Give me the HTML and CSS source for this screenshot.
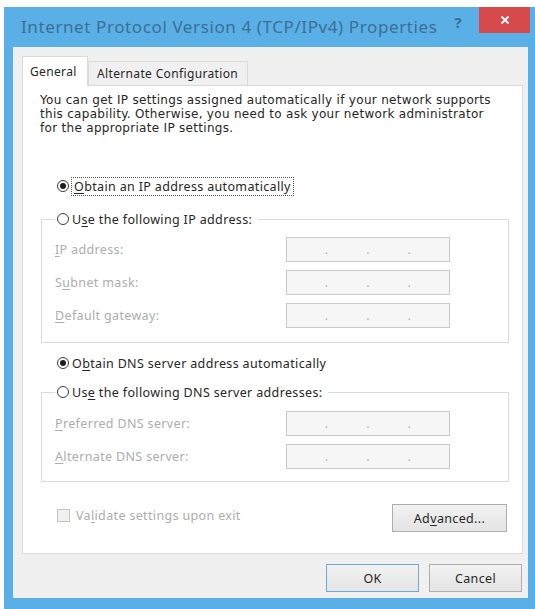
FILE: index.html
```html
<!DOCTYPE html>
<html lang="en">
<head>
    <meta charset="UTF-8">
    <title>Internet Protocol Version 4 (TCP/IPv4) Properties</title>
    <link rel="stylesheet" href="styles.css">
</head>
<body>
    <div class="window">
        <div class="titlebar">
            <span class="title">Internet Protocol Version 4 (TCP/IPv4) Properties</span>
            <span class="help">?</span>
            <span class="close">
                <svg width="10" height="10" viewBox="0 0 10 10"><path d="M1.5 1.5 L8.5 8.5 M8.5 1.5 L1.5 8.5" stroke="#fff" stroke-width="1.8"/></svg>
            </span>
        </div>

        <div class="content">
            <div class="tabs">
                <div class="tab active">General</div>
                <div class="tab">Alternate Configuration</div>
            </div>

            <div class="panel">
                <p class="intro">You can get IP settings assigned automatically if your network supports<br>this capability. Otherwise, you need to ask your network administrator<br>for the appropriate IP settings.</p>

                <div class="option first">
                    <span class="radio checked"></span>
                    <span class="focus"><u>O</u>btain an IP address automatically</span>
                </div>

                <fieldset class="group ip-group">
                    <legend class="option">
                        <span class="radio"></span>
                        <span>U<u>s</u>e the following IP address:</span>
                    </legend>
                    <div class="field"><span class="label"><u>I</u>P address:</span><span class="ip"><i>.</i><i>.</i><i>.</i></span></div>
                    <div class="field"><span class="label">S<u>u</u>bnet mask:</span><span class="ip"><i>.</i><i>.</i><i>.</i></span></div>
                    <div class="field"><span class="label"><u>D</u>efault gateway:</span><span class="ip"><i>.</i><i>.</i><i>.</i></span></div>
                </fieldset>

                <div class="option dns-auto">
                    <span class="radio checked"></span>
                    <span>O<u>b</u>tain DNS server address automatically</span>
                </div>

                <fieldset class="group dns-group">
                    <legend class="option">
                        <span class="radio"></span>
                        <span>Us<u>e</u> the following DNS server addresses:</span>
                    </legend>
                    <div class="field"><span class="label"><u>P</u>referred DNS server:</span><span class="ip"><i>.</i><i>.</i><i>.</i></span></div>
                    <div class="field"><span class="label"><u>A</u>lternate DNS server:</span><span class="ip"><i>.</i><i>.</i><i>.</i></span></div>
                </fieldset>

                <div class="panel-footer">
                    <span class="check"><span class="box"></span><span>Va<u>l</u>idate settings upon exit</span></span>
                    <button class="btn advanced">Ad<u>v</u>anced...</button>
                </div>
            </div>

            <div class="actions">
                <button class="btn default">OK</button>
                <button class="btn">Cancel</button>
            </div>
        </div>
    </div>
</body>
</html>
```

FILE: styles.css
```css
:root {
    --frame: #5aafe6;
    --text: #262626;
    --disabled: #adadad;
    --line: #dadada;
}

body {
    margin: 0;
    background: #fff;
    font-family: "Noto Sans", "Open Sans", sans-serif;
    font-size: 12.5px;
    letter-spacing: 0.35px;
    color: var(--text);
}

u {
    text-decoration-thickness: 1px;
    text-underline-offset: 2px;
}

/* Window frame */
.window {
    box-sizing: border-box;
    width: 531px;
    margin: 7px 0 0 4px;
    padding: 0 7px 11px 9px;
    background: var(--frame);
}

.titlebar {
    height: 40px;
    display: flex;
}

.title {
    flex: 1;
    padding: 8px 0 0 8px;
    font-size: 17px;
    letter-spacing: 0.6px;
    color: #3b6f94;
    white-space: nowrap;
}

.help {
    padding: 5px 17px 0 0;
    font-size: 15px;
    font-weight: bold;
    color: #3b6f94;
}

.close {
    width: 51px;
    height: 26px;
    margin-right: -2px;
    background: #d64a4c;
    display: flex;
    align-items: center;
    justify-content: center;
}

.content {
    height: 551px;
    background: #f0f0f0;
    overflow: hidden;
}

/* Tabs */
.tabs {
    display: flex;
    align-items: flex-end;
    margin: 9px 0 0 9px;
    height: 29px;
}

.tab {
    box-sizing: border-box;
    width: 160px;
    height: 24px;
    padding: 3px 0 0 8px;
    border: 1px solid var(--line);
    border-bottom: none;
    background: #f0f0f0;
    font-size: 12px;
}

.tab.active {
    height: 30px;
    margin-bottom: -1px;
    width: 66px;
    padding: 6px 0 0 7px;
    background: #fff;
    position: relative;
    z-index: 1;
}

.panel {
    box-sizing: border-box;
    width: 501px;
    height: 469px;
    margin-left: 9px;
    border: 1px solid var(--line);
    background: #fff;
}

.intro {
    margin: 7px 0 0 17px;
    font-family: "DejaVu Sans", sans-serif;
    font-size: 12px;
    letter-spacing: 0.3px;
    line-height: 14px;
}

/* Radios and group boxes */
.option {
    display: flex;
    align-items: center;
    height: 16px;
    gap: 3px;
}

.option.first {
    margin: 43px 0 0 34px;
}

.option.dns-auto {
    margin: 12px 0 0 34px;
}

.radio {
    box-sizing: border-box;
    width: 12px;
    height: 12px;
    border: 1px solid #3a3a3a;
    border-radius: 50%;
    background: #fff;
    display: flex;
    align-items: center;
    justify-content: center;
}

.radio.checked::after {
    content: "";
    width: 6px;
    height: 6px;
    border-radius: 50%;
    background: #1e1e1e;
}

.focus {
    padding: 0 2px;
    outline: 1px dotted #555;
}

.group {
    margin: 17px 13px 0 18px;
    padding: 10px 13px 14px;
    border: 1px solid var(--line);
}

.group legend {
    padding: 0 6px 0 2px;
}

.dns-group {
    margin-top: 13px;
    padding-top: 11px;
    padding-bottom: 12px;
}

.field {
    display: flex;
    align-items: center;
    height: 25px;
    margin-bottom: 8px;
}

.field:last-child {
    margin-bottom: 0;
}

.label {
    width: 231px;
    color: var(--disabled);
}

.ip {
    box-sizing: border-box;
    width: 164px;
    height: 25px;
    border: 1px solid #cacaca;
    background: #f6f6f6;
    display: flex;
    justify-content: space-evenly;
    align-items: center;
    color: #b4b4b4;
}

.ip i {
    font-style: normal;
    line-height: 1;
    padding-top: 2px;
}

/* Footer */
.panel-footer {
    display: flex;
    justify-content: space-between;
    align-items: center;
    margin: 22px 15px 0 34px;
}

.check {
    display: flex;
    align-items: center;
    gap: 6px;
    color: var(--disabled);
    margin-top: -5px;
}

.box {
    box-sizing: border-box;
    width: 13px;
    height: 13px;
    border: 1px solid #c4c4c4;
    background: #f0f0f0;
}

.btn {
    box-sizing: border-box;
    height: 28px;
    border: 1px solid #adadad;
    background: linear-gradient(#f2f2f2, #e4e4e4);
    font-family: inherit;
    font-size: 12.5px;
    letter-spacing: 0.35px;
    color: var(--text);
    padding: 0;
}

.advanced {
    width: 115px;
}

.actions {
    display: flex;
    justify-content: flex-end;
    gap: 10px;
    margin: 10px 6px 0 0;
}

.actions .btn {
    width: 93px;
}

.btn.default {
    border-color: #6fa9dc;
}
```
